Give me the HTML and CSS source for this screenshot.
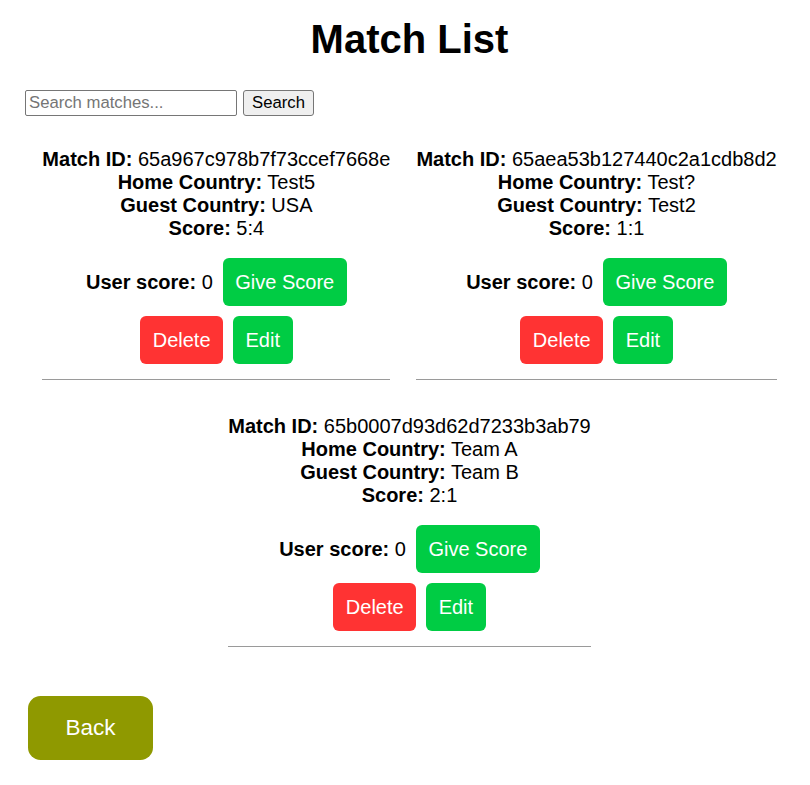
FILE: index.html
```html
<!DOCTYPE html>
<html lang="en">
<head>
<meta charset="utf-8">
<title>Match List</title>
<link rel="stylesheet" href="styles.css">
</head>
<body>
<div class="page">
  <h1 class="title">Match List</h1>
  <div class="search">
    <input class="search-input" type="text" placeholder="Search matches...">
    <button class="search-btn" type="button">Search</button>
  </div>
  <div class="matches">
    <div class="card">
      <div class="info">
        <div><b>Match ID:</b> 65a967c978b7f73ccef7668e</div>
        <div><b>Home Country:</b> Test5</div>
        <div><b>Guest Country:</b> USA</div>
        <div><b>Score:</b> 5:4</div>
      </div>
      <div class="row row-score">
        <span><b>User score:</b> 0</span>
        <button class="btn green" type="button">Give Score</button>
      </div>
      <div class="row row-actions">
        <button class="btn red" type="button">Delete</button>
        <button class="btn green" type="button">Edit</button>
      </div>
      <hr class="sep">
    </div>
    <div class="card">
      <div class="info">
        <div><b>Match ID:</b> 65aea53b127440c2a1cdb8d2</div>
        <div><b>Home Country:</b> Test?</div>
        <div><b>Guest Country:</b> Test2</div>
        <div><b>Score:</b> 1:1</div>
      </div>
      <div class="row row-score">
        <span><b>User score:</b> 0</span>
        <button class="btn green" type="button">Give Score</button>
      </div>
      <div class="row row-actions">
        <button class="btn red" type="button">Delete</button>
        <button class="btn green" type="button">Edit</button>
      </div>
      <hr class="sep">
    </div>
    <div class="card">
      <div class="info">
        <div><b>Match ID:</b> 65b0007d93d62d7233b3ab79</div>
        <div><b>Home Country:</b> Team A</div>
        <div><b>Guest Country:</b> Team B</div>
        <div><b>Score:</b> 2:1</div>
      </div>
      <div class="row row-score">
        <span><b>User score:</b> 0</span>
        <button class="btn green" type="button">Give Score</button>
      </div>
      <div class="row row-actions">
        <button class="btn red" type="button">Delete</button>
        <button class="btn green" type="button">Edit</button>
      </div>
      <hr class="sep">
    </div>
  </div>
  <div class="back-wrap">
    <button class="back" type="button">Back</button>
  </div>
</div>
</body>
</html>
```
FILE: styles.css
```css
html, body {
  margin: 0;
  padding: 0;
  background: #ffffff;
}
body {
  font-family: "Liberation Sans", Arial, sans-serif;
  font-size: 20px;
  line-height: 23px;
  color: #000000;
}
.page {
  padding: 16px 10px 0 19px;
}
.title {
  margin: 0;
  font-size: 40px;
  line-height: 46px;
  font-weight: bold;
  text-align: center;
}
.search {
  margin-top: 28px;
  padding-left: 6px;
  display: flex;
  align-items: center;
  gap: 6px;
}
.search-input {
  box-sizing: border-box;
  width: 212px;
  height: 26px;
  margin: 0;
  padding: 1px 3px;
  border: 1px solid #767676;
  border-radius: 2px;
  font-family: "Liberation Sans", Arial, sans-serif;
  font-size: 16.7px;
  color: #000;
}
.search-input::placeholder {
  color: #757575;
}
.search-btn {
  box-sizing: border-box;
  width: 71px;
  height: 26px;
  margin: 0;
  padding: 0 6px;
  border: 1px solid #767676;
  border-radius: 3px;
  background: #efefef;
  font-family: "Liberation Sans", Arial, sans-serif;
  font-size: 16.7px;
  color: #000;
}
.matches {
  margin-top: 32px;
  display: flex;
  flex-wrap: wrap;
  justify-content: center;
  column-gap: 26px;
  row-gap: 35px;
}
.card {
  display: flex;
  flex-direction: column;
  text-align: center;
}
.info b, .row b {
  font-weight: bold;
}
.row {
  display: flex;
  justify-content: center;
  align-items: center;
  gap: 10px;
}
.row-score {
  margin-top: 18px;
}
.row-actions {
  margin-top: 10px;
}
.btn {
  margin: 0;
  border: none;
  border-radius: 6px;
  padding: 12.5px 12.5px;
  font-family: "Liberation Sans", Arial, sans-serif;
  font-size: 20px;
  line-height: 23px;
  color: #ffffff;
}
.green {
  background: #00cc44;
}
.red {
  background: #ff3333;
}
.sep {
  margin: 15px 0 0 0;
  border: none;
  border-top: 1px solid #9a9a9a;
  height: 0;
}
.back-wrap {
  margin-top: 49px;
  padding-left: 9px;
  padding-bottom: 20px;
}
.back {
  margin: 0;
  border: none;
  border-radius: 12.5px;
  padding: 19px 37.5px;
  background: #8f9900;
  color: #ffffff;
  font-family: "Liberation Sans", Arial, sans-serif;
  font-size: 22.5px;
  line-height: 26px;
}
```
